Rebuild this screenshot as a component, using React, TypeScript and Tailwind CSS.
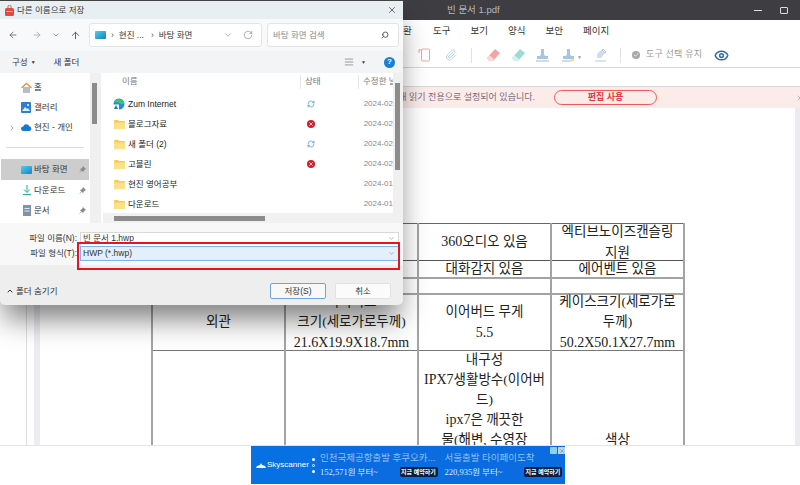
import { ArrowLeft, ArrowRight, ArrowUp, AlignJustify, ChevronDown, ChevronRight, ChevronUp, RotateCw, Search, X, RefreshCw, Paperclip, Eye, Check } from 'lucide-react';

const Folder = () => (
  <svg width="11" height="9" viewBox="0 0 11 9" className="shrink-0">
    <path d="M0 1a1 1 0 0 1 1-1h3l1 1h5a1 1 0 0 1 1 1v6a1 1 0 0 1-1 1H1a1 1 0 0 1-1-1z" fill="#fbc94f" />
    <path d="M0 2.500h11V8a1 1 0 0 1-1 1H1a1 1 0 0 1-1-1z" fill="#fde08a" />
  </svg>
);

const ZumIcon = () => (
  <svg width="12" height="12" viewBox="0 0 12 12" className="shrink-0">
    <circle cx="6" cy="6" r="5.500" fill="#1c8fd8" />
    <path d="M1 4.500C2 1 8 -.5 11 4c.6 2-1.500 2.500-3 2C6.500 5 4 4 1 4.500z" fill="#3fc66d" />
    <rect x="0" y="6.500" width="6" height="5.500" fill="#fff" />
    <path d="M1 11l2-4 2 4z" fill="#2a6fb8" />
  </svg>
);

const DesktopIcon = () => (
  <svg width="11" height="8" viewBox="0 0 11 8" className="shrink-0">
    <defs>
      <linearGradient id="dk" x1="0" y1="0" x2="1" y2="1">
        <stop offset="0" stopColor="#4fd0ea" />
        <stop offset="1" stopColor="#1780c8" />
      </linearGradient>
    </defs>
    <rect width="11" height="8" rx="1" fill="url(#dk)" />
  </svg>
);

const Pin = () => (
  <svg width="7" height="7" viewBox="0 0 7 7" className="shrink-0">
    <path d="M4 0l3 3-1 .5-1.500 1.500-.3 1.300L2.700 4.800 .7 6.800l-.4-.4 2-2L.8 3 2.100 2.700 3.500 1.200z" fill="#8b8b8b" />
  </svg>
);

const ErrorDot = () => (
  <div className="w-[8px] h-[8px] rounded-full bg-[#d81b2c] flex items-center justify-center">
    <X size={6} strokeWidth={3} className="text-white" />
  </div>
);

const SyncDot = () => <RefreshCw size={8} strokeWidth={2} className="text-[#3d94e0]" />;

// latin runs sit a little larger than the hangul in the document
const Num = ({ children }: { children: React.ReactNode }) => <span className="text-[14px]">{children}</span>;

const files = [
  { name: 'Zum Internet', status: 'sync', date: '2024-02', zum: true },
  { name: '블로그자료', status: 'error', date: '2024-02' },
  { name: '새 폴더 (2)', status: 'sync', date: '2024-02' },
  { name: '고블린', status: 'error', date: '2024-02' },
  { name: '현진 영어공부', status: '', date: '2024-01' },
  { name: '다운로드', status: '', date: '2024-01' },
];

const menus = ['도구', '보기', '양식', '보안', '페이지'];

function SaveDialog() {
  return (
    <div className="absolute left-0 top-0 w-[403px] h-[305px] flex flex-col bg-[#eeeeee] rounded-b-[5px] overflow-hidden shadow-[0_18px_28px_-4px_rgba(0,0,0,0.5)] text-[#333] text-[8.5px] leading-none border-t border-[#444]">
      {/* title */}
      <div className="h-[18px] shrink-0 flex items-center bg-[#e8eff3] pl-[5px] pr-[6px]">
        <svg width="9" height="11" viewBox="0 0 9 11" className="shrink-0">
          <path d="M3 3V1.500a1.500 1.500 0 0 1 3 0V3" stroke="#9c6b50" fill="none" />
          <rect x="0" y="3" width="9" height="8" rx="1.500" fill="#e5483f" />
          <rect x="1.500" y="6" width="6" height="1" fill="#f9c3b0" />
        </svg>
        <span className="ml-[3px] text-[#333]">다른 이름으로 저장</span>
        <X size={10} strokeWidth={1.5} className="ml-auto text-[#222]" />
      </div>

      {/* nav */}
      <div className="h-[32px] shrink-0 flex items-center bg-[#f8f9fa] pl-[8px]">
        <ArrowLeft size={10} className="text-[#666]" />
        <ArrowRight size={10} className="ml-[14px] text-[#aaa]" />
        <ChevronDown size={8} className="ml-[10px] text-[#666]" />
        <ArrowUp size={11} className="ml-[10px] text-[#555]" />
        <div className="ml-[8px] w-[173px] h-[24px] flex items-center bg-white border border-[#e4e4e4] rounded-[3px] pl-[5px] pr-[8px]">
          <DesktopIcon />
          <span className="ml-[5px] text-[#555]">›</span>
          <span className="ml-[5px]">현진 ...</span>
          <span className="ml-[7px] text-[#555]">›</span>
          <span className="ml-[5px]">바탕 화면</span>
          <ChevronDown size={10} strokeWidth={1.2} className="ml-[31px] text-[#666]" />
          <RotateCw size={10} strokeWidth={1.2} className="ml-auto text-[#666]" />
        </div>
        <div className="ml-[5px] w-[132px] h-[24px] flex items-center bg-white border border-[#e4e4e4] rounded-[3px] pl-[5px] pr-[9px] text-[#8a8a8a]">
          <span>바탕 화면 검색</span>
          <Search size={8} strokeWidth={2.5} className="ml-auto text-[#444] -scale-x-100" />
        </div>
      </div>

      {/* command bar */}
      <div className="h-[22px] shrink-0 flex items-center bg-[#f3f4f6] pl-[12px] pr-[8px]">
        <span>구성</span>
        <span className="ml-[3px] text-[5px]">▼</span>
        <span className="ml-[18px]">새 폴더</span>
        <AlignJustify size={10} strokeWidth={1.5} className="ml-auto text-[#666]" />
        <span className="ml-[7px] text-[5px] text-[#444]">▼</span>
        <div className="ml-[18px] w-[11px] h-[11px] rounded-full bg-[#1b7ed6] text-white text-[8px] font-bold flex items-center justify-center">?</div>
      </div>

      {/* body */}
      <div className="h-[150px] shrink-0 flex bg-white">
        <div className="w-[90px] shrink-0 pt-[4px] relative">
          <div className="h-[20px] flex items-center pl-[21px]">
            <svg width="11" height="11" viewBox="0 0 11 11" className="shrink-0">
              <path d="M2 5h7v6H2z" fill="#b9bcc2" />
              <path d="M5.500 .5L11 5.500l-1 .8-4.500-4-4.500 4-1-.8z" fill="#ee8a3c" />
            </svg>
            <span className="ml-[2px]">홈</span>
          </div>
          <div className="h-[20px] flex items-center pl-[21px]">
            <svg width="10" height="11" viewBox="0 0 10 11" className="shrink-0">
              <rect width="10" height="11" rx="1" fill="#2e7fd0" />
              <path d="M1 9l3-4 2 2 1-1 2 3z" fill="#dcefff" />
              <circle cx="7" cy="3" r="1" fill="#fff" />
            </svg>
            <span className="ml-[3px]">갤러리</span>
          </div>
          <div className="h-[21px] flex items-center pl-[8px]">
            <ChevronRight size={8} className="text-[#888]" />
            <svg width="11" height="7" viewBox="0 0 11 7" className="ml-[5px] shrink-0">
              <path d="M2.500 7a2.300 2.300 0 0 1-.3-4.600A3.300 3.300 0 0 1 8.300 2.300 2.400 2.400 0 0 1 8.500 7z" fill="#1478d4" />
            </svg>
            <span className="ml-[2px]">현진 - 개인</span>
          </div>
          <div className="mx-[6px] mt-[9px] mb-[11px] h-px bg-[#dcdcdc]" />
          <div className="h-[21px] mx-[1px] flex items-center pl-[20px] pr-[3px] bg-[#cdcdcd]">
            <DesktopIcon />
            <span className="ml-[2px]">바탕 화면</span>
            <span className="ml-auto"><Pin /></span>
          </div>
          <div className="h-[20px] flex items-center pl-[23px] pr-[4px]">
            <svg width="8" height="10" viewBox="0 0 8 10" className="shrink-0">
              <path d="M4 0v7M1 4.500L4 7.500 7 4.500M0 9.500h8" stroke="#1fb48a" fill="none" strokeWidth="1" />
            </svg>
            <span className="ml-[3px]">다운로드</span>
            <span className="ml-auto"><Pin /></span>
          </div>
          <div className="h-[20px] flex items-center pl-[23px] pr-[4px]">
            <svg width="8" height="11" viewBox="0 0 8 11" className="shrink-0">
              <rect width="8" height="11" fill="#7d93ae" />
              <rect x="1.500" y="3" width="5" height="1" fill="#dfe7f0" />
              <rect x="1.500" y="5.500" width="5" height="1" fill="#dfe7f0" />
            </svg>
            <span className="ml-[3px]">문서</span>
            <span className="ml-auto"><Pin /></span>
          </div>
        </div>

        <div className="w-[11px] shrink-0 bg-[#f0f0f0] pl-[2px] pt-[10px]">
          <div className="w-[5px] h-[41px] bg-[#8c8c8c]" />
        </div>

        <div className="flex-1 min-w-0 flex flex-col">
          <div className="h-[21px] shrink-0 flex items-start pt-[2px] text-[#777]">
            <span className="ml-[21px] w-[178px] mt-[2px]">이름</span>
            <div className="w-px h-[14px] bg-[#e6e6e6]" />
            <span className="ml-[4px] w-[53px] mt-[2px]">상태</span>
            <div className="w-px h-[14px] bg-[#e6e6e6]" />
            <span className="ml-[4px] whitespace-nowrap overflow-hidden w-[30px] mt-[2px]">수정한 날</span>
          </div>
          <div className="flex-1 min-h-0 flex flex-col overflow-hidden">
            {files.map((f) => (
              <div key={f.name} className="h-[20px] shrink-0 flex items-center">
                <div className="w-[26px] flex justify-end pr-[2px] shrink-0">{f.zum ? <ZumIcon /> : <Folder />}</div>
                <span className="ml-[1px] w-[177px] text-[#222] whitespace-nowrap">{f.name}</span>
                <div className="w-[60px] pl-[3px] shrink-0">
                  {f.status === 'sync' && <SyncDot />}
                  {f.status === 'error' && <ErrorDot />}
                </div>
                <span className="text-[#888] text-[8px] whitespace-nowrap">{f.date}</span>
              </div>
            ))}
          </div>
          <div className="h-[10px] shrink-0 bg-[#f1f1f1] ml-[2px] pl-[11px] pt-[3px]">
            <div className="w-[151px] h-[5px] bg-[#8c8c8c]" />
          </div>
        </div>

        <div className="w-[10px] shrink-0 bg-[#f0f0f0] pl-[2px] pt-[10px]">
          <div className="w-[5px] h-[87px] bg-[#8c8c8c]" />
        </div>
      </div>

      {/* file name + type */}
      <div className="h-[42px] shrink-0 bg-[#f8f8f8] pt-[9px] pr-[4px] relative">
        <div className="h-[14px] flex items-center">
          <span className="w-[77px] text-right pb-[2px]">파일 이름(N):</span>
          <div className="ml-[3px] flex-1 h-[15px] bg-white border border-[#d9d9d9] flex items-center pl-[2px] pr-[3px] pb-[2px]">
            <span>빈 문서 1.hwp</span>
            <ChevronDown size={7} className="ml-auto text-[#888]" />
          </div>
        </div>
        <div className="h-[15px] flex items-center">
          <span className="w-[77px] text-right">파일 형식(T):</span>
          <div className="ml-[3px] flex-1 h-[15px] bg-[#e3eff9] border border-[#7eb4ea] flex items-center pl-[2px] pr-[3px]">
            <span>HWP (*.hwp)</span>
            <ChevronDown size={7} className="ml-auto text-[#888]" />
          </div>
        </div>
        <div className="absolute left-[77px] top-[19px] w-[323px] h-[28px] border-[2.5px] border-[#e5141f]" />
      </div>

      {/* bottom */}
      <div className="flex-1 flex items-center pl-[6px] pr-[12px] pt-[12px] relative">
        <ChevronUp size={8} strokeWidth={3} className="text-[#333]" />
        <span className="ml-[2px]">폴더 숨기기</span>
        <div className="ml-auto w-[56px] h-[16px] bg-[#f8f8f8] border border-[#6aa5dc] rounded-[2px] flex items-center justify-center">저장(S)</div>
        <div className="ml-[9px] w-[56px] h-[16px] bg-[#fbfbfb] border border-[#e2e2e2] rounded-[2px] flex items-center justify-center">취소</div>
      </div>
    </div>
  );
}

const cellBase = 'border-x-2 border-[#a3a3a3] text-center align-middle p-0';

function DocTable() {
  return (
    <table className="table-fixed w-[534px] border-collapse text-[#222] text-[13.5px] font-['Liberation_Serif','Noto_Sans_CJK_KR',serif] border-t border-[#666]">
      <tbody>
        <tr className="h-[36px] border-b border-[#555]">
          <td className={cellBase} />
          <td className={cellBase} />
          <td className={cellBase}><Num>360</Num>오디오 있음</td>
          <td className={cellBase}>
            <div className="-my-[3px] leading-[21px]">엑티브노이즈캔슬링<br />지원</div>
          </td>
        </tr>
        <tr className="h-[17px] border-b-2 border-[#a3a3a3]">
          <td className={cellBase} />
          <td className={cellBase} />
          <td className={cellBase}><div className="h-[15px] leading-[15px]">대화감지 있음</div></td>
          <td className={cellBase}><div className="h-[15px] leading-[15px]">에어벤트 있음</div></td>
        </tr>
        <tr className="h-[16px] border-b-2 border-[#a3a3a3]">
          <td className={cellBase} />
          <td className={cellBase} />
          <td className={cellBase} />
          <td className={cellBase} />
        </tr>
        <tr className="h-[57px] border-b border-[#777]">
          <td className={cellBase}>외관</td>
          <td className={cellBase}>
            <div className="-my-[3px] leading-[20.5px]">이어버드<br />크기(세로가로두께)<br /><Num>21.6X19.9X18.7mm</Num></div>
          </td>
          <td className={cellBase}>이어버드 무게<br /><Num>5.5</Num></td>
          <td className={cellBase}>
            <div className="-my-[3px] leading-[20.5px]">케이스크기(세로가로<br />두께)<br /><Num>50.2X50.1X27.7mm</Num></div>
          </td>
        </tr>
        <tr className="h-[178px]">
          <td className={cellBase} />
          <td className={cellBase} />
          <td className={`${cellBase} !align-top`}>
            <div className="leading-[20px] -mt-[1px]">내구성<br /><Num>IPX7</Num>생활방수(이어버<br />드)<br /><Num>ipx7</Num>은 깨끗한<br />물(해변, 수영장</div>
          </td>
          <td className={cellBase}>색상</td>
        </tr>
      </tbody>
    </table>
  );
}

function AdPanel({ title, price }: { title: string; price: string }) {
  return (
    <div className="flex-1 bg-[#0a6ce0] px-[2px] pt-[5px] min-w-0">
      <div className="text-[9.5px] leading-[14px] text-[#8cc0f5] whitespace-nowrap">{title}</div>
      <div className="mt-[1px] flex items-center justify-between pr-[1px]">
        <span className="text-[8.5px] text-[#d9eaff] whitespace-nowrap font-['Liberation_Serif','Noto_Sans_CJK_KR',serif]">{price}</span>
        <span className="w-[38px] h-[10px] rounded-[2px] bg-[#0a1f3d] text-white text-[6px] leading-[10px] text-center font-bold whitespace-nowrap">지금 예약하기</span>
      </div>
    </div>
  );
}

export default function App() {
  return (
    <div className="relative w-[800px] h-[485px] overflow-hidden bg-white font-['Liberation_Sans','Noto_Sans_CJK_KR',sans-serif] flex flex-col">
      {/* window title */}
      <div className="h-[20px] shrink-0 bg-[#3d3d42] flex items-center pl-[447px] pr-[12px] text-[#b9b9bd] text-[9.5px]">
        <span>빈 문서 1.pdf</span>
        <div className="ml-auto w-[8px] h-px bg-[#ddd]" />
        <div className="ml-[18px] w-[8px] h-[7px] border border-[#ddd] rounded-[1px]" />
      </div>

      {/* menu */}
      <div className="h-[23px] shrink-0 flex items-center pl-[403px] text-[9.5px] text-[#333]">
        <span className="w-[30px]">환</span>
        {menus.map((m) => (
          <span key={m} className="w-[37.500px]">{m}</span>
        ))}
      </div>

      {/* toolbar */}
      <div className="h-[25px] shrink-0 flex items-center pl-[418px] border-b border-[#d8d8dc]">
        <svg width="12" height="14" viewBox="0 0 12 14" fill="none" stroke="#f4a6a6" strokeWidth="1">
          <rect x="3.500" y="1" width="8" height="12" rx="1" />
          <path d="M1 5V2h3M2 1L.5 2.500" />
        </svg>
        <Paperclip size={12} strokeWidth={1.5} className="ml-[15px] text-[#a9c3e2]" />
        <div className="ml-[14px] w-px h-[15px] bg-[#e2e2e2]" />
        <svg width="14" height="13" viewBox="0 0 14 13" className="ml-[14px]">
          <path d="M9 0l5 4-7 8H3L1 9z" fill="#f4a3a3" />
          <path d="M3 6l5 4-1 2H3L1 9z" fill="#f9d9d6" />
        </svg>
        <svg width="14" height="13" viewBox="0 0 14 13" className="ml-[11px]">
          <path d="M9 0l5 4-7 8H3L1 9z" fill="#9adbd4" />
          <path d="M3 6l5 4-1 2H3L1 9z" fill="#d5f0ed" />
        </svg>
        <svg width="13" height="13" viewBox="0 0 13 13" className="ml-[11px]">
          <path d="M5 0h3v5l1 2h3v3H1V7h3l1-2z" fill="#a9c3e2" />
          <rect x="0" y="11" width="13" height="2" fill="#cddcee" />
        </svg>
        <svg width="13" height="13" viewBox="0 0 13 13" className="ml-[13px]">
          <path d="M5 0h3v5l1 2h3v3H1V7h3l1-2z" fill="#a9c3e2" />
          <rect x="0" y="11" width="9" height="2" fill="#cddcee" />
          <circle cx="10.500" cy="11" r="1.500" fill="#f7d774" />
        </svg>
        <span className="ml-[2px] mt-[6px] text-[5px] text-[#999]">▼</span>
        <svg width="13" height="13" viewBox="0 0 13 13" className="ml-[12px]">
          <path d="M7 1l4 3-4 5H3V5z" fill="#cddcee" />
          <path d="M9 0l3 3-1 1-3-3zM1 12h11" stroke="#b5cbe4" fill="none" />
        </svg>
        <div className="ml-[13px] w-px h-[15px] bg-[#e2e2e2]" />
        <div className="ml-[11px] w-[8px] h-[8px] rounded-full bg-[#a8a8a8] flex items-center justify-center">
          <Check size={6} strokeWidth={3} className="text-white" />
        </div>
        <span className="ml-[6px] text-[9px] text-[#9a9a9a] tracking-[0.2px]">도구 선택 유지</span>
        <Eye size={15} strokeWidth={2.4} className="ml-[12px] text-[#2c6ca8]" />
      </div>

      <div className="h-[19px] shrink-0 border-b border-[#d8d8dc]" />

      {/* read only banner */}
      <div className="h-[21px] shrink-0 bg-[#fbecea] flex items-center justify-end text-[9px] text-[#7a6a80]">
        <span className="whitespace-nowrap">해 읽기 전용으로 설정되어 있습니다.</span>
        <div className="ml-[19px] w-[103px] h-[15px] border-[1.5px] border-[#ee5a5a] rounded-full flex items-center justify-center text-[#e63b3b] font-bold">편집 사용</div>
        <X size={8} strokeWidth={2} className="ml-[139px] mr-[-4px] text-[#999]" />
      </div>

      {/* document */}
      <div className="h-[338px] shrink-0 flex overflow-hidden border-b border-[#e4e2ea]">
        <div className="w-[27px] shrink-0 border-r border-[#dedede]" />
        <div className="w-[7px] shrink-0" />
        <div className="w-[6px] shrink-0 bg-[#ecedf1]" />
        <div className="flex-1 min-w-0 pl-[111px] pt-[115px]">
          <DocTable />
        </div>
        <div className="w-[5px] shrink-0 bg-[#ecebf0]" />
      </div>

      {/* ad */}
      <div className="flex-1 pl-[251px]">
        <div className="relative w-[314px] h-[38px] bg-[#0770e3] flex items-stretch">
          <div className="w-[59px] shrink-0 flex items-center pl-[5px] text-white text-[8px] whitespace-nowrap">
            <svg width="10" height="6" viewBox="0 0 10 6" className="mr-[1px] shrink-0">
              <path d="M5 1l1 2 3 1 1 2H0l1-2 3-1z" fill="#fff" />
            </svg>
            Skyscanner
          </div>
          <div className="w-[7px] shrink-0 flex flex-col items-center justify-center gap-[3px]">
            <div className="w-[3px] h-[3px] rounded-full bg-white" />
            <div className="w-[3px] h-[3px] rounded-full border border-white" />
            <div className="w-[3px] h-[3px] rounded-full bg-white" />
          </div>
          <div className="flex-1 min-w-0 flex gap-[2px] ml-[1px]">
            <AdPanel title="인천국제공항출발 후쿠오카..." price="152,571원 부터~" />
            <AdPanel title="서울출발 타이페이도착" price="220,935원 부터~" />
          </div>
          <div className="absolute right-0 top-[1px] flex items-center gap-[1px]">
            <div className="w-[7px] h-[7px] bg-[#8fd0ef] rounded-[1px]" />
            <div className="w-[7px] h-[7px] bg-[#bcd4ea] flex items-center justify-center">
              <X size={6} strokeWidth={2} className="text-[#4f7fae]" />
            </div>
          </div>
        </div>
      </div>

      <SaveDialog />
    </div>
  );
}
